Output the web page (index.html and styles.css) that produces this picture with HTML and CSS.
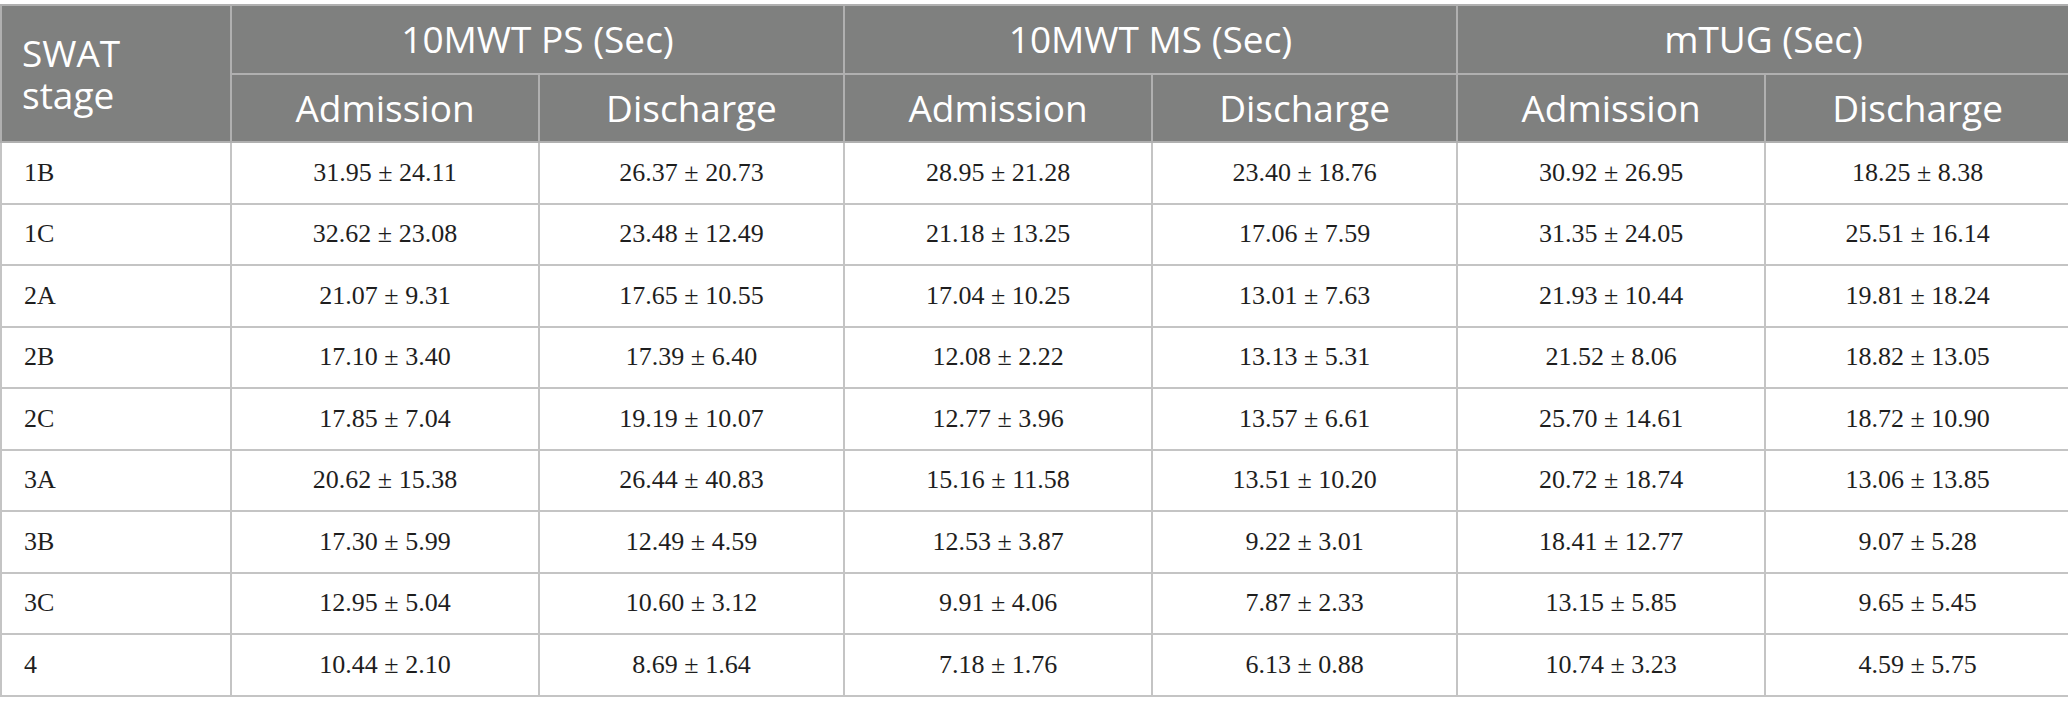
FILE: index.html
```html
<!DOCTYPE html>
<html>
<head>
<meta charset="utf-8">
<link rel="stylesheet" href="styles.css">
</head>
<body>
<table class="data">
  <colgroup>
    <col class="c-stage">
    <col class="c-a"><col class="c-b">
    <col class="c-a"><col class="c-b">
    <col class="c-a"><col class="c-b">
  </colgroup>
  <thead>
    <tr class="h1">
      <th rowspan="2" class="stage-h">SWAT<br>stage</th>
      <th colspan="2">10MWT PS (Sec)</th>
      <th colspan="2">10MWT MS (Sec)</th>
      <th colspan="2">mTUG (Sec)</th>
    </tr>
    <tr class="h2">
      <th>Admission</th><th>Discharge</th>
      <th>Admission</th><th>Discharge</th>
      <th>Admission</th><th>Discharge</th>
    </tr>
  </thead>
  <tbody>
    <tr><td>1B</td><td>31.95 ± 24.11</td><td>26.37 ± 20.73</td><td>28.95 ± 21.28</td><td>23.40 ± 18.76</td><td>30.92 ± 26.95</td><td>18.25 ± 8.38</td></tr>
    <tr><td>1C</td><td>32.62 ± 23.08</td><td>23.48 ± 12.49</td><td>21.18 ± 13.25</td><td>17.06 ± 7.59</td><td>31.35 ± 24.05</td><td>25.51 ± 16.14</td></tr>
    <tr><td>2A</td><td>21.07 ± 9.31</td><td>17.65 ± 10.55</td><td>17.04 ± 10.25</td><td>13.01 ± 7.63</td><td>21.93 ± 10.44</td><td>19.81 ± 18.24</td></tr>
    <tr><td>2B</td><td>17.10 ± 3.40</td><td>17.39 ± 6.40</td><td>12.08 ± 2.22</td><td>13.13 ± 5.31</td><td>21.52 ± 8.06</td><td>18.82 ± 13.05</td></tr>
    <tr><td>2C</td><td>17.85 ± 7.04</td><td>19.19 ± 10.07</td><td>12.77 ± 3.96</td><td>13.57 ± 6.61</td><td>25.70 ± 14.61</td><td>18.72 ± 10.90</td></tr>
    <tr><td>3A</td><td>20.62 ± 15.38</td><td>26.44 ± 40.83</td><td>15.16 ± 11.58</td><td>13.51 ± 10.20</td><td>20.72 ± 18.74</td><td>13.06 ± 13.85</td></tr>
    <tr><td>3B</td><td>17.30 ± 5.99</td><td>12.49 ± 4.59</td><td>12.53 ± 3.87</td><td>9.22 ± 3.01</td><td>18.41 ± 12.77</td><td>9.07 ± 5.28</td></tr>
    <tr><td>3C</td><td>12.95 ± 5.04</td><td>10.60 ± 3.12</td><td>9.91 ± 4.06</td><td>7.87 ± 2.33</td><td>13.15 ± 5.85</td><td>9.65 ± 5.45</td></tr>
    <tr><td>4</td><td>10.44 ± 2.10</td><td>8.69 ± 1.64</td><td>7.18 ± 1.76</td><td>6.13 ± 0.88</td><td>10.74 ± 3.23</td><td>4.59 ± 5.75</td></tr>
  </tbody>
</table>
</body>
</html>
```
FILE: styles.css
```css
html, body {
  margin: 0;
  padding: 0;
  background: #ffffff;
}

body {
  padding-top: 4px;
}

.data {
  border-collapse: collapse;
  table-layout: fixed;
  width: 2067px;
}

.c-stage { width: 230px; }
.c-a { width: 308px; }
.c-b { width: 305px; }

.data th {
  background: #7f807f;
  color: #ffffff;
  font-family: "Open Sans", "Noto Sans", sans-serif;
  font-weight: 400;
  font-size: 37px;
  line-height: 42px;
  border: 2px solid #b0b0b0;
  padding: 0 8px;
  text-align: center;
  height: 68.5px;
  box-sizing: border-box;
}

.data th.stage-h {
  text-align: left;
  padding-left: 20px;
}

.data td {
  font-family: "Liberation Serif", "Times New Roman", serif;
  font-size: 26px;
  color: #1e1e1e;
  border: 2px solid #c4c4c4;
  text-align: center;
  height: 61.5px;
  padding: 0 8px;
  box-sizing: border-box;
}

.data td:first-child {
  text-align: left;
  padding-left: 22px;
}
```
